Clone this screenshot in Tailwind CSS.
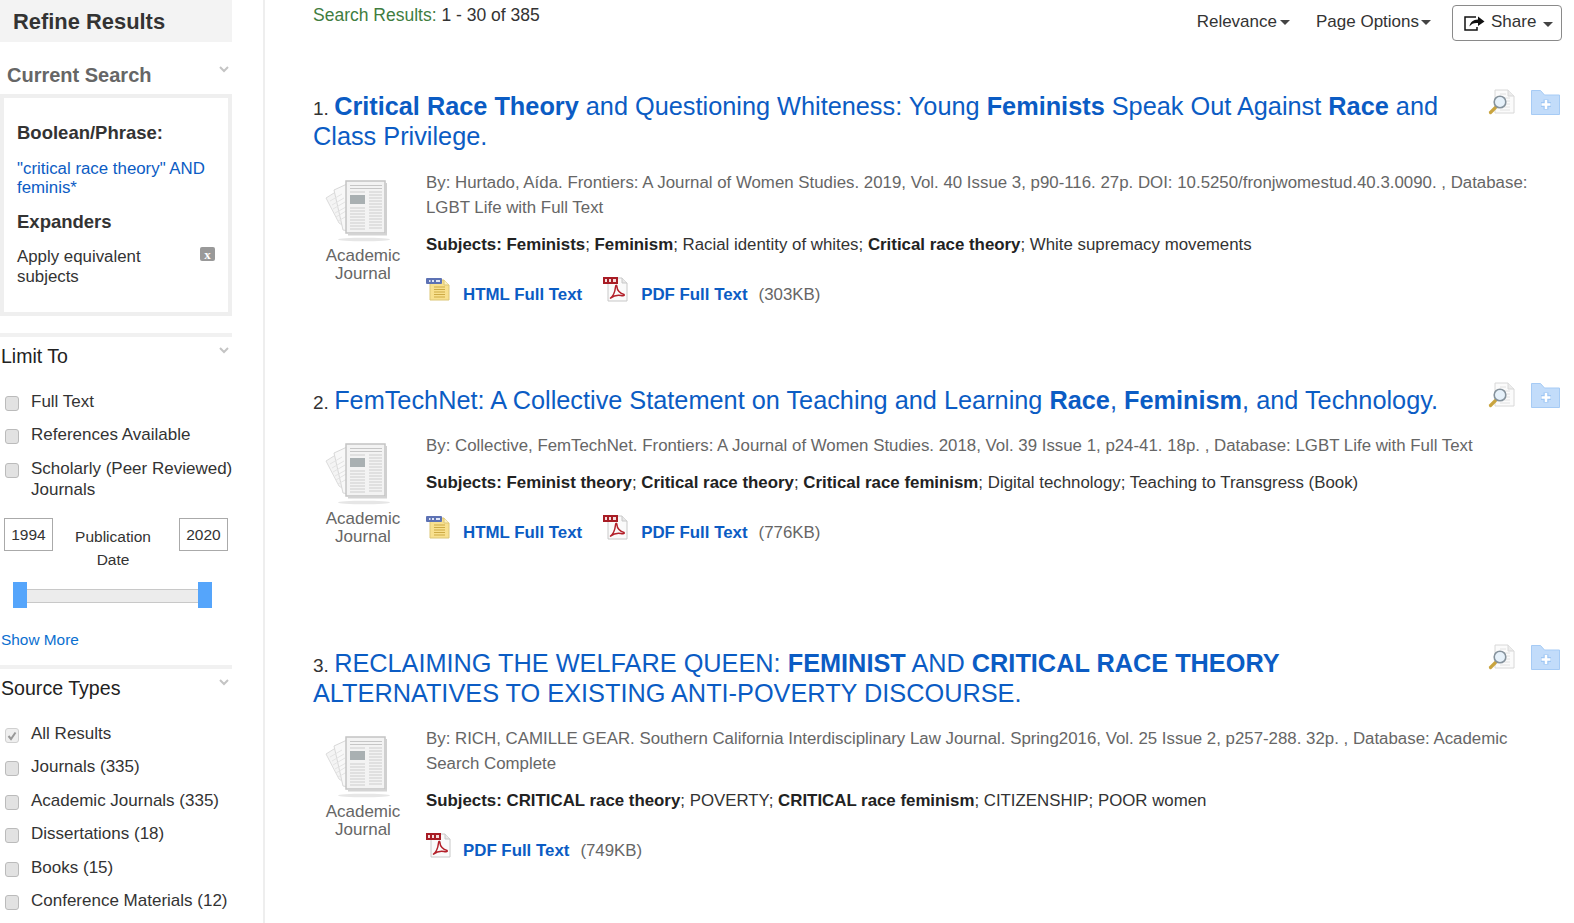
<!DOCTYPE html>
<html lang="en">
<head>
<meta charset="utf-8">
<title>Search Results</title>
<script src="https://cdn.jsdelivr.net/npm/@tailwindcss/browser@4"></script>
</head>
<body class="bg-white overflow-hidden font-['Liberation_Sans',Arial,sans-serif] text-[#333]">
<svg width="0" height="0" class="absolute">
  <defs>
    <symbol id="journal" viewBox="0 0 66 64">
      <ellipse cx="39" cy="60.500" rx="26" ry="1.800" fill="#e6e6e6"/>
      <path d="M1 19 L17 9 L23 50 L14 44Z" fill="#f4f4f4" stroke="#dcdcdc"/>
      <path d="M9 11 L22 5 L24 52 L18 51Z" fill="#f8f8f8" stroke="#d8d8d8"/>
      <path d="M5 22l12-7M7 26l12-7M8 30l12-7M10 34l11-6M11 38l10-6M13 42l9-5" stroke="#e4e4e4"/>
      <rect x="21" y="2" width="39" height="52" fill="#f3f3f3" stroke="#c4c4c4" stroke-width="1.500"/>
      <rect x="60" y="4" width="2" height="52" fill="#d0d0d0"/>
      <rect x="23" y="54.500" width="39" height="2" fill="#d4d4d4"/>
      <path d="M25 6.500h32M25 9.500h32" stroke="#c6c6c6"/>
      <rect x="25" y="16" width="15" height="9" fill="#a9b0b2"/>
      <path d="M25 13h15M25 29h15M25 32h15M25 35h15M25 38h15M25 41h15M25 44h15M25 47h15M25 50h15M44 13h13M44 16h13M44 19h13M44 22h13M44 25h13M44 28h13M44 31h13M44 34h13M44 37h13M44 40h13M44 43h13M44 46h13M44 49h13" stroke="#cdcdcd"/>
    </symbol>
    <symbol id="html" viewBox="0 0 24 24">
      <path d="M4 3h14l5 5v15H4Z" fill="#f8e08e" stroke="#dcc677"/>
      <path d="M18 3v5h5" fill="#fbf0c4" stroke="#dcc677"/>
      <path d="M8 10h11M8 12.500h11M8 15h11M8 17.500h11M8 20h11" stroke="#cdaa45"/>
      <rect x="0" y="1" width="16" height="6" rx="1" fill="#5d72b4"/>
      <path d="M3 3h1.500v2h-1.500zM6 3h2v2h-2zM10 3h4v2h-4z" fill="#dfe5f5"/>
    </symbol>
    <symbol id="pdf" viewBox="0 0 25 25">
      <path d="M5 1h14l5 5v18H5Z" fill="#fafafa" stroke="#c8c8c8"/>
      <path d="M19 1v5h5" fill="#e8e8e8" stroke="#c8c8c8"/>
      <rect x="0" y="0" width="15" height="7" fill="#a81c25"/>
      <path d="M2 2h2v3h-2zM6 2h2v3h-2zM10 2h3v3h-3z" fill="#f5dcdc"/>
      <path d="M7 21.500c3-2 5-7 5.500-11.500 0-2.500 1.500-2.500 1.500 0 0 3 3 6.500 7 7.500 1 1-1 1.500-3 1-4-1-7 0-11 3Z" fill="none" stroke="#b3202a" stroke-width="1.500"/>
    </symbol>
    <symbol id="preview" viewBox="0 0 27 26">
      <path d="M7 1h13l6 6v17H7Z" fill="#fbfbfb" stroke="#d8d8d8"/>
      <path d="M20 1v6h6" fill="#ececec" stroke="#d8d8d8"/>
      <path d="M12 5h6M16 9h6M16 12h6M16 15h6M16 18h6M12 21h10" stroke="#e2e2e2"/>
      <path d="M7.500 18.500l-5 5" stroke="#c9a43f" stroke-width="3.200" stroke-linecap="round"/>
      <circle cx="12" cy="13" r="5.800" fill="#e6f1fa" stroke="#85929c" stroke-width="1.600"/>
    </symbol>
    <symbol id="folder" viewBox="0 0 29 25">
      <path d="M.5.500h9l4 4.500h15v19.500H.5Z" fill="#c2dcfa" stroke="#a6cbf5"/>
      <path d="M15 9.500v10M10 14.500h10" stroke="#9fc7f4" stroke-width="5"/>
      <path d="M15 10v9M10.500 14.500h9" stroke="#fff" stroke-width="2.500"/>
    </symbol>
    <symbol id="chev" viewBox="0 0 10 7">
      <path d="M1 1l4 4 4-4" fill="none" stroke="#c4c4c4" stroke-width="2"/>
    </symbol>
  </defs>
</svg>

<div class="flex h-[923px] overflow-hidden">
  <aside class="w-[265px] shrink-0 border-r-2 border-[#eeeeee]">
    <div class="w-[232px]">
      <h2 class="h-[42px] bg-[#f3f3f3] pl-[13px] text-[21.900px] font-bold leading-[44px] text-[#333]">Refine Results</h2>

      <div class="relative mt-[20px] h-[32px] pl-[7px] text-[20px] font-bold leading-[26px] text-[#666]">
        Current Search
        <svg class="absolute right-[3px] top-[4px] h-[7px] w-[10px]"><use href="#chev"/></svg>
      </div>
      <div class="h-[222px] border-4 border-[#efefef] px-[13px] pt-[23px]">
        <h3 class="text-[18.500px] font-bold leading-[24px] text-[#333]">Boolean/Phrase:</h3>
        <a class="mt-[14px] block text-[16.850px] leading-[19px] text-[#0b5cc4]">"critical race theory" AND feminis*</a>
        <h3 class="mt-[13px] text-[18.500px] font-bold leading-[24px] text-[#333]">Expanders</h3>
        <div class="mt-[13px] flex items-start justify-between text-[16.850px] leading-[20px]">
          <span class="w-[150px]">Apply equivalent subjects</span>
          <span class="flex h-[14px] w-[15px] items-center justify-center rounded-[2px] bg-[#999] font-['Liberation_Serif',serif] text-[13px] font-bold leading-none text-white">x</span>
        </div>
      </div>

      <section class="mt-[17px] border-t-4 border-[#f1f1f1]">
        <div class="relative h-[48px] pl-[1px] pt-[6px] text-[19.500px] leading-[26px] text-[#222]">
          Limit To
          <svg class="absolute right-[3px] top-[10px] h-[7px] w-[10px]"><use href="#chev"/></svg>
        </div>
        <ul class="text-[17px] leading-[20px]">
          <li class="flex h-[33px] items-start pt-[7px]"><input type="checkbox" class="ml-[5px] mr-[12px] mt-[4px] h-[15px] w-[14px] shrink-0 appearance-none rounded-[3px] border border-[#bbb] bg-[#e2e2e2]"><span>Full Text</span></li>
          <li class="flex h-[34px] items-start pt-[7px]"><input type="checkbox" class="ml-[5px] mr-[12px] mt-[4px] h-[15px] w-[14px] shrink-0 appearance-none rounded-[3px] border border-[#bbb] bg-[#e2e2e2]"><span>References Available</span></li>
          <li class="flex items-start pt-[6px]"><input type="checkbox" class="ml-[5px] mr-[12px] mt-[5px] h-[15px] w-[14px] shrink-0 appearance-none rounded-[3px] border border-[#bbb] bg-[#e2e2e2]"><span class="leading-[21px] whitespace-nowrap">Scholarly (Peer Reviewed)<br>Journals</span></li>
        </ul>
        <div class="mt-[18px] flex items-start px-[4px] text-[15.500px]">
          <div class="flex h-[33px] w-[49px] items-center justify-center border border-[#aaa]">1994</div>
          <div class="flex-1 pr-[6px] pt-[7px] text-center leading-[23px]">Publication<br>Date</div>
          <div class="flex h-[33px] w-[49px] items-center justify-center border border-[#aaa]">2020</div>
        </div>
        <div class="relative mx-[13px] mt-[11px] h-[26px] w-[199px]">
          <div class="absolute inset-x-[13px] top-[7px] h-[14px] border-y border-[#c8c8c8] bg-[#ececec]"></div>
          <div class="absolute left-0 top-0 h-[26px] w-[14px] bg-[#55a5fb]"></div>
          <div class="absolute right-0 top-0 h-[26px] w-[14px] bg-[#55a5fb]"></div>
        </div>
        <a class="mt-[22px] block pl-[1px] text-[15.400px] leading-[20px] text-[#0b6fd0]">Show More</a>
      </section>

      <section class="mt-[15px] border-t-4 border-[#f1f1f1]">
        <div class="relative h-[48px] pl-[1px] pt-[6px] text-[19.600px] leading-[26px] text-[#222]">
          Source Types
          <svg class="absolute right-[3px] top-[10px] h-[7px] w-[10px]"><use href="#chev"/></svg>
        </div>
        <ul class="text-[17px] leading-[20px]">
          <li class="flex h-[33px] items-start pt-[7px]"><span class="ml-[5px] mr-[12px] mt-[4px] flex h-[15px] w-[14px] shrink-0 items-center justify-center rounded-[3px] border border-[#d0d0d0] bg-[#efefef]"><svg class="h-[10px] w-[10px]" viewBox="0 0 10 10"><path d="M1.500 5l2.500 3 4.500-6.500" fill="none" stroke="#999" stroke-width="2"/></svg></span><span>All Results</span></li>
          <li class="flex h-[34px] items-start pt-[7px]"><input type="checkbox" class="ml-[5px] mr-[12px] mt-[4px] h-[15px] w-[14px] shrink-0 appearance-none rounded-[3px] border border-[#bbb] bg-[#e2e2e2]"><span>Journals (335)</span></li>
          <li class="flex h-[33px] items-start pt-[7px]"><input type="checkbox" class="ml-[5px] mr-[12px] mt-[4px] h-[15px] w-[14px] shrink-0 appearance-none rounded-[3px] border border-[#bbb] bg-[#e2e2e2]"><span>Academic Journals (335)</span></li>
          <li class="flex h-[34px] items-start pt-[7px]"><input type="checkbox" class="ml-[5px] mr-[12px] mt-[4px] h-[15px] w-[14px] shrink-0 appearance-none rounded-[3px] border border-[#bbb] bg-[#e2e2e2]"><span>Dissertations (18)</span></li>
          <li class="flex h-[33px] items-start pt-[7px]"><input type="checkbox" class="ml-[5px] mr-[12px] mt-[4px] h-[15px] w-[14px] shrink-0 appearance-none rounded-[3px] border border-[#bbb] bg-[#e2e2e2]"><span>Books (15)</span></li>
          <li class="flex h-[34px] items-start pt-[7px]"><input type="checkbox" class="ml-[5px] mr-[12px] mt-[4px] h-[15px] w-[14px] shrink-0 appearance-none rounded-[3px] border border-[#bbb] bg-[#e2e2e2]"><span>Conference Materials (12)</span></li>
        </ul>
      </section>
    </div>
  </aside>

  <main class="min-w-0 flex-1 pl-[48px] pr-[12px]">
    <div class="flex h-[41px] items-start justify-between pt-[5px]">
      <div class="text-[17.500px] leading-[20px]"><span class="text-[#3f7d3f]">Search Results:</span> 1 - 30 of 385</div>
      <div class="flex items-center text-[17px] text-[#333]">
        <span class="mr-[26px] flex items-center pb-[3px]">Relevance<i class="ml-[3px] mt-[2px] block border-x-[5px] border-t-[5px] border-x-transparent border-t-[#444]"></i></span>
        <span class="mr-[21px] flex items-center pb-[3px]">Page Options<i class="ml-[2px] mt-[2px] block border-x-[5px] border-t-[5px] border-x-transparent border-t-[#444]"></i></span>
        <span class="flex h-[36px] w-[110px] items-center rounded-[4px] border border-[#8a8a8a] pb-[3px] pl-[11px]">
          <svg class="mr-[6px] mt-[2px] h-[16px] w-[21px]" viewBox="0 0 21 16"><path d="M12 2H1v13h12v-3" fill="none" stroke="#111" stroke-width="1.500"/><path d="M20.500 6.500 14 1.500v3c-5 0-8 3-8.500 7 2-3 5-4 8.500-3.500v3Z" fill="#111"/></svg>
          Share<i class="ml-[7px] mt-[5px] block border-x-[5px] border-t-[5px] border-x-transparent border-t-[#444]"></i>
        </span>
      </div>
    </div>

    <article class="relative mt-[50px] h-[294px]">
      <h2 class="w-[1135px] text-[25.300px] leading-[30px] text-[#0b5cc4]"><span class="text-[19px] leading-none text-[#333]">1. </span><b>Critical Race Theory</b> and Questioning Whiteness: Young <b>Feminists</b> Speak Out Against <b>Race</b> and Class Privilege.</h2>
      <div class="absolute left-[1175px] top-[-2px] flex gap-[16px]"><svg class="h-[26px] w-[27px]"><use href="#preview"/></svg><svg class="mt-[1px] h-[25px] w-[29px]"><use href="#folder"/></svg></div>
      <div class="mt-[19px] flex">
        <div class="w-[113px] shrink-0 text-[#666]">
          <svg class="ml-[12px] mt-[9px] h-[64px] w-[66px]"><use href="#journal"/></svg>
          <div class="mt-[4px] w-[100px] text-center text-[17px] leading-[18px]">Academic Journal</div>
        </div>
        <div class="min-w-0 flex-1 pr-[20px]">
          <p class="text-[16.850px] leading-[25px] text-[#666]">By: Hurtado, Aída. Frontiers: A Journal of Women Studies. 2019, Vol. 40 Issue 3, p90-116. 27p. DOI: 10.5250/fronjwomestud.40.3.0090. , Database: LGBT Life with Full Text</p>
          <p class="mt-[12px] text-[16.850px] leading-[25px] text-[#333]"><b class="text-[#222]">Subjects: Feminists</b>; <b class="text-[#222]">Feminism</b>; Racial identity of whites; <b class="text-[#222]">Critical race theory</b>; White supremacy movements</p>
          <div class="mt-[20px] flex items-start text-[16.850px] leading-[20px] text-[#666]">
            <svg class="h-[24px] w-[24px]"><use href="#html"/></svg>
            <a class="ml-[13px] mt-[8px] font-bold text-[#0b5cc4]">HTML Full Text</a>
            <svg class="ml-[21px] h-[25px] w-[25px]"><use href="#pdf"/></svg>
            <a class="ml-[13px] mt-[8px] font-bold text-[#0b5cc4]">PDF Full Text</a>
            <span class="ml-[11px] mt-[8px]">(303KB)</span>
          </div>
        </div>
      </div>
    </article>

    <article class="relative h-[263px]">
      <h2 class="w-[1135px] text-[25.300px] leading-[30px] text-[#0b5cc4]"><span class="text-[19px] leading-none text-[#333]">2. </span>FemTechNet: A Collective Statement on Teaching and Learning <b>Race</b>, <b>Feminism</b>, and Technology.</h2>
      <div class="absolute left-[1175px] top-[-3px] flex gap-[16px]"><svg class="h-[26px] w-[27px]"><use href="#preview"/></svg><svg class="mt-[1px] h-[25px] w-[29px]"><use href="#folder"/></svg></div>
      <div class="mt-[18px] flex">
        <div class="w-[113px] shrink-0 text-[#666]">
          <svg class="ml-[12px] mt-[9px] h-[64px] w-[66px]"><use href="#journal"/></svg>
          <div class="mt-[4px] w-[100px] text-center text-[17px] leading-[18px]">Academic Journal</div>
        </div>
        <div class="min-w-0 flex-1 pr-[20px]">
          <p class="text-[16.850px] leading-[25px] text-[#666]">By: Collective, FemTechNet. Frontiers: A Journal of Women Studies. 2018, Vol. 39 Issue 1, p24-41. 18p. , Database: LGBT Life with Full Text</p>
          <p class="mt-[12px] text-[16.850px] leading-[25px] text-[#333]"><b class="text-[#222]">Subjects: Feminist theory</b>; <b class="text-[#222]">Critical race theory</b>; <b class="text-[#222]">Critical race feminism</b>; Digital technology; Teaching to Transgress (Book)</p>
          <div class="mt-[20px] flex items-start text-[16.850px] leading-[20px] text-[#666]">
            <svg class="h-[24px] w-[24px]"><use href="#html"/></svg>
            <a class="ml-[13px] mt-[8px] font-bold text-[#0b5cc4]">HTML Full Text</a>
            <svg class="ml-[21px] h-[25px] w-[25px]"><use href="#pdf"/></svg>
            <a class="ml-[13px] mt-[8px] font-bold text-[#0b5cc4]">PDF Full Text</a>
            <span class="ml-[11px] mt-[8px]">(776KB)</span>
          </div>
        </div>
      </div>
    </article>

    <article class="relative">
      <h2 class="w-[1135px] text-[25.300px] leading-[30px] text-[#0b5cc4]"><span class="text-[19px] leading-none text-[#333]">3. </span>RECLAIMING THE WELFARE QUEEN: <b>FEMINIST</b> AND <b>CRITICAL RACE THEORY</b> ALTERNATIVES TO EXISTING ANTI-POVERTY DISCOURSE.</h2>
      <div class="absolute left-[1175px] top-[-4px] flex gap-[16px]"><svg class="h-[26px] w-[27px]"><use href="#preview"/></svg><svg class="mt-[1px] h-[25px] w-[29px]"><use href="#folder"/></svg></div>
      <div class="mt-[18px] flex">
        <div class="w-[113px] shrink-0 text-[#666]">
          <svg class="ml-[12px] mt-[9px] h-[64px] w-[66px]"><use href="#journal"/></svg>
          <div class="mt-[4px] w-[100px] text-center text-[17px] leading-[18px]">Academic Journal</div>
        </div>
        <div class="min-w-0 flex-1 pr-[20px]">
          <p class="text-[16.850px] leading-[25px] text-[#666]">By: RICH, CAMILLE GEAR. Southern California Interdisciplinary Law Journal. Spring2016, Vol. 25 Issue 2, p257-288. 32p. , Database: Academic Search Complete</p>
          <p class="mt-[12px] text-[16.850px] leading-[25px] text-[#333]"><b class="text-[#222]">Subjects: CRITICAL race theory</b>; POVERTY; <b class="text-[#222]">CRITICAL race feminism</b>; CITIZENSHIP; POOR women</p>
          <div class="mt-[20px] flex items-start text-[16.850px] leading-[20px] text-[#666]">
            <svg class="h-[25px] w-[25px]"><use href="#pdf"/></svg>
            <a class="ml-[12px] mt-[8px] font-bold text-[#0b5cc4]">PDF Full Text</a>
            <span class="ml-[11px] mt-[8px]">(749KB)</span>
          </div>
        </div>
      </div>
    </article>
  </main>
</div>
</body>
</html>
